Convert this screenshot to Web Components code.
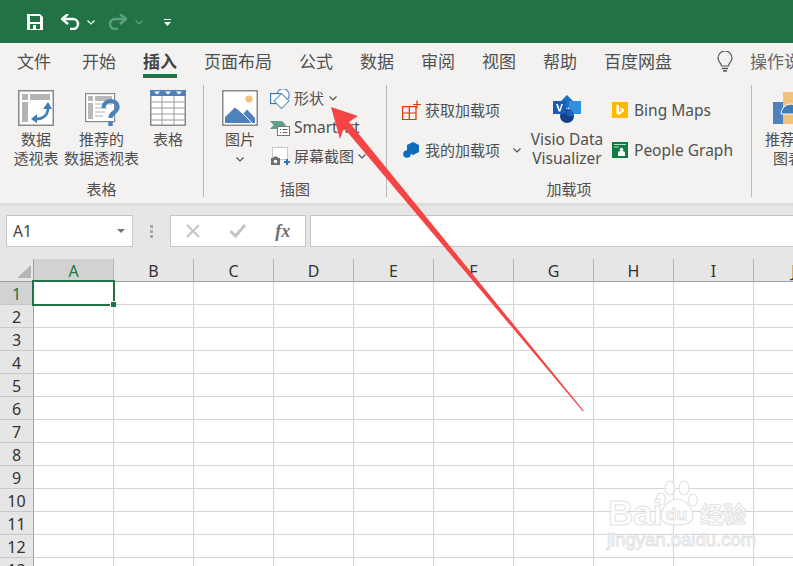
<!DOCTYPE html>
<html lang="zh">
<head>
<meta charset="utf-8">
<title>Excel</title>
<style>
  html, body { margin: 0; padding: 0; background: #fff; }
  body { font-family: "Noto Sans", "Noto Sans CJK SC", sans-serif; color: #444; }
  excel-app { width: 793px; height: 566px; }
  .lat { font-size: 15.5px; }
</style>
</head>
<body>
<excel-app>
  <excel-titlebar></excel-titlebar>
  <excel-tabs></excel-tabs>
  <excel-ribbon>
    <ribbon-group label="表格" style="width:204px">
      <big-button style="width:46px;margin-left:13px">
        <svg slot="icon" width="36" height="36" viewBox="0 0 36 36">
          <rect x=".75" y=".75" width="34.5" height="34.5" fill="#fff" stroke="#8a8a8a" stroke-width="1.5"/>
          <path d="M4 4h6v6H4zM12 4h20v6H12zM4 12h6v20H4z" fill="#b4b4b4"/>
          <path d="M15 29c9 1 15-3 15-11" fill="none" stroke="#3f7cb8" stroke-width="2.6"/>
          <path d="M13 29l6-5v9zM30 12l-5 7h9z" fill="#3f7cb8"/>
        </svg>
        数据<br>透视表
      </big-button>
      <big-button style="width:75px;margin-left:5px">
        <svg slot="icon" width="36" height="36" viewBox="0 0 36 36">
          <rect x="1.6" y="3.6" width="29" height="28" fill="#fff" stroke="#8a8a8a" stroke-width="1.2"/>
          <path d="M4 6h5v5H4zM11 6h17v5H11zM4 13h5v16H4z" fill="#b8b8b8"/>
          <path d="M11 14h17M11 18h12M11 22h10M11 26h8" stroke="#d8d8d8" stroke-width="2"/>
          <path d="M19.5 18c0-9 14-9 14-1 0 6-7 5-7 11" fill="none" stroke="#4a82bd" stroke-width="4.2"/>
          <rect x="24.3" y="31" width="4.4" height="5" fill="#4a82bd"/>
        </svg>
        推荐的<br>数据透视表
      </big-button>
      <big-button style="width:36px;margin-left:11px">
        <svg slot="icon" width="36" height="36" viewBox="0 0 36 36">
          <rect x=".75" y=".75" width="34.5" height="34.5" fill="#fff" stroke="#8a8a8a" stroke-width="1.5"/>
          <rect width="36" height="6" fill="#4f81bd"/>
          <path d="M4 1.5h6l-3 3zM15 1.5h6l-3 3zM26 1.5h6l-3 3z" fill="#fff"/>
          <path d="M12 6v29M24 6v29M1 12h34M1 18h34M1 24h34M1 30h34" stroke="#9a9a9a" stroke-width="1"/>
        </svg>
        表格
      </big-button>
    </ribbon-group>

    <ribbon-group label="插图" style="width:183px">
      <big-button style="width:36px;margin-left:18px">
        <svg slot="icon" width="36" height="36" viewBox="0 0 36 36">
          <rect x=".75" y=".75" width="34.5" height="34.5" fill="#fff" stroke="#8a8a8a" stroke-width="1.5"/>
          <circle cx="27" cy="9" r="3.6" fill="#f0c27b"/>
          <path d="M3 33V27L13 17.5 21 24 25 19.5 33 28V33z" fill="#4f81bd"/>
          <path d="M18 20.5L30 33" stroke="#fff" stroke-width="1"/>
        </svg>
        图片<down-chevron style="margin-top:8px"></down-chevron>
      </big-button>
      <small-column style="margin-left:12px;padding-top:4px;--row:29px">
        <small-button>
          <svg slot="icon" width="20" height="20" viewBox="0 0 20 20">
            <circle cx="13" cy="6" r="6.2" fill="#fff" stroke="#4a82bd" stroke-width="1.1"/>
            <rect x=".6" y="4.6" width="10" height="10" fill="#fff" stroke="#2f6fae" stroke-width="1.1"/>
            <path d="M11.5 4.5L19 12l-7.5 7.5L4 12z" fill="#fff" stroke="#6a9ccc" stroke-width="1.1"/>
          </svg>
          形状<down-chevron style="margin-left:5px"></down-chevron>
        </small-button>
        <small-button>
          <svg slot="icon" width="20" height="20" viewBox="0 0 20 20">
            <path d="M0 3h12l4 4-4 4H0l3.5-4z" fill="#5f9e8a"/>
            <rect x="7.5" y="8.5" width="12" height="9" fill="#fff" stroke="#777"/>
            <path d="M10 11.5h1M12.5 11.5h5M10 14.5h1M12.5 14.5h5" stroke="#666"/>
          </svg>
          <span class="lat">SmartArt</span>
        </small-button>
        <small-button>
          <svg slot="icon" width="20" height="20" viewBox="0 0 20 20">
            <rect x="2.5" y=".5" width="15" height="12" fill="#fff" stroke="#999" stroke-dasharray="1 1"/>
            <path d="M1 11h2l1-1.5h3l1 1.5h2v7H1z" fill="#6e6e6e"/>
            <circle cx="5.5" cy="14.5" r="1.8" fill="#fff"/>
            <path d="M14 15h6M17 12v6" stroke="#2f74b5" stroke-width="2"/>
          </svg>
          屏幕截图<down-chevron style="margin-left:4px"></down-chevron>
        </small-button>
      </small-column>
    </ribbon-group>

    <ribbon-group label="加载项" style="width:365px">
      <small-column style="margin-left:15px;padding-top:10px;--row:40px;width:100px">
        <small-button gap="3">
          <svg slot="icon" width="20" height="20" viewBox="0 0 20 20">
            <path d="M.6 6.6H14v13H.6zM.6 13h13.4M7.3 6.6v13" fill="none" stroke="#d83b01" stroke-width="1.2"/>
            <path d="M11 4.5h8M15 .5v8" stroke="#d83b01" stroke-width="1.2"/>
          </svg>
          获取加载项
        </small-button>
        <small-button gap="3">
          <svg slot="icon" width="20" height="20" viewBox="0 0 20 20">
            <path d="M11 2l6 3v7l-6 3-6-3V5z" fill="#0f6cbd"/>
            <circle cx="5" cy="14" r="3.8" fill="#0f6cbd"/>
          </svg>
          我的加载项
        </small-button>
      </small-column>
      <down-chevron style="margin:68px 0 0 11px;align-self:flex-start"></down-chevron>
      <big-button style="width:78px;margin-left:7px">
        <svg slot="icon" width="32" height="36" viewBox="0 0 32 36">
          <path d="M16 5l7 7-7 7-7-7z" fill="#1b6ec2"/>
          <rect x="18" y="11" width="12" height="13" fill="#2f8fe0"/>
          <circle cx="16" cy="26" r="7" fill="#123f87"/>
          <path d="M16 19a7 7 0 0 1 7 7h-7z" fill="#1f5fb8"/>
          <rect x="2" y="11" width="13" height="13" fill="#185abd"/>
          <path d="M5 14h1.9l1.7 5.5L10.3 14H12l-2.600 7.500H7.600z" fill="#fff"/>
        </svg>
        <span class="lat">Visio Data<br>Visualizer</span>
      </big-button>
      <small-column style="margin-left:6px;padding-top:10px;--row:40px">
        <small-button gap="6">
          <svg slot="icon" width="16" height="20" viewBox="0 0 16 20">
            <rect y="2" width="16" height="16" fill="#ffb900"/>
            <path d="M4.5 4.5l2.500 1v6.500l3-1.800-1.500-.7-.8-2 4.300 1.500v2.200L7 15l-2.500-1.400z" fill="#fff"/>
          </svg>
          <span class="lat">Bing Maps</span>
        </small-button>
        <small-button gap="6">
          <svg slot="icon" width="16" height="20" viewBox="0 0 16 20">
            <rect y="2" width="16" height="16" fill="#107c41"/>
            <path d="M2 4.5h12M2 7h5" stroke="#b9dcc8" stroke-width="1.2"/>
            <circle cx="9.5" cy="9.5" r="1.8" fill="#fff"/>
            <path d="M6 16v-4l2-1h3l2 1v4z" fill="#fff"/>
          </svg>
          <span class="lat">People Graph</span>
        </small-button>
      </small-column>
    </ribbon-group>

    <ribbon-group label="" style="width:60px">
      <big-button style="width:60px;margin-left:13px;align-items:flex-start">
        <svg slot="icon" width="36" height="36" viewBox="0 0 36 36" style="margin-left:1px">
          <rect x="7" y="12" width="10" height="22" fill="#4f81bd"/>
          <rect x="17" y="2" width="10" height="32" fill="#f0c27b"/>
          <path d="M15 24a10 10 0 0 1 20 0z" fill="#3f7cb8" stroke="#fff" stroke-width="1"/>
        </svg>
        <span style="display:block;white-space:nowrap;text-align:left">推荐的<br><span style="margin-left:8px">图表</span></span>
      </big-button>
    </ribbon-group>
  </excel-ribbon>
  <excel-formula-bar></excel-formula-bar>
  <excel-sheet></excel-sheet>
  <excel-watermark></excel-watermark>
  <excel-arrow></excel-arrow>
</excel-app>

<script>
class ExcelApp extends HTMLElement {
  constructor() {
    super();
    this.attachShadow({ mode: "open" });
  }

  connectedCallback() {
    this.shadowRoot.innerHTML = `
    <style>
      :host {
        display: flex;
        flex-direction: column;
        position: relative;
        overflow: hidden;
      }
    </style>
    <slot></slot>
    `;
  }
}

class ExcelTitlebar extends HTMLElement {
  constructor() {
    super();
    this.attachShadow({ mode: "open" });
  }

  connectedCallback() {
    this.shadowRoot.innerHTML = `
    <style>
      :host {
        display: flex;
        align-items: center;
        height: 43px;
        flex: none;
        background: #217346;
        padding-left: 27px;
        padding-top: 1px;
        box-sizing: border-box;
      }
      svg { display: block; flex: none; }
    </style>
    <svg width="16" height="16" viewBox="0 0 16 16">
      <path d="M0 0h13l3 3v13H0z" fill="#fff"/>
      <rect x="3" y="2" width="10" height="6" fill="#217346"/>
      <rect x="3" y="10" width="10" height="5" fill="#217346"/>
      <rect x="6" y="11" width="3" height="4" fill="#fff"/>
    </svg>
    <svg width="19" height="16" viewBox="0 0 19 16" style="margin-left:18px">
      <path d="M2 5h10a5 5 0 0 1 0 10H9" fill="none" stroke="#fff" stroke-width="2.4"/>
      <path d="M7 0L1 5l6 5" fill="none" stroke="#fff" stroke-width="2.4"/>
    </svg>
    <svg width="8" height="5" viewBox="0 0 8 5" style="margin-left:7px">
      <path d="M.5.5L4 4 7.5.5" fill="none" stroke="#fff" stroke-width="1.2"/>
    </svg>
    <svg width="19" height="16" viewBox="0 0 19 16" style="margin-left:13px">
      <path d="M17 5H7a5 5 0 0 0 0 10h3" fill="none" stroke="#5f9f7f" stroke-width="2.4"/>
      <path d="M12 0l6 5-6 5" fill="none" stroke="#5f9f7f" stroke-width="2.4"/>
    </svg>
    <svg width="8" height="5" viewBox="0 0 8 5" style="margin-left:8px">
      <path d="M.5.5L4 4 7.5.5" fill="none" stroke="#5f9f7f" stroke-width="1.2"/>
    </svg>
    <svg width="7" height="7" viewBox="0 0 7 7" style="margin-left:21px">
      <path d="M0 .5h7" stroke="#fff"/>
      <path d="M0 3h7L3.5 7z" fill="#fff"/>
    </svg>
    `;
  }
}

class ExcelTabs extends HTMLElement {
  constructor() {
    super();
    this.attachShadow({ mode: "open" });
  }

  connectedCallback() {
    const tabs = ["文件", "开始", "插入", "页面布局", "公式", "数据", "审阅", "视图", "帮助", "百度网盘"];
    this.shadowRoot.innerHTML = `
    <style>
      :host {
        display: flex;
        height: 37px;
        flex: none;
        box-sizing: border-box;
        padding-left: 17px;
        gap: 27px;
        background: #f3f2f1;
        font: 17px/37px "Noto Sans CJK SC", sans-serif;
        color: #505050;
        white-space: nowrap;
        overflow: hidden;
      }
      span { flex: none; height: 36px; margin-top: -1px; }
      span:first-of-type { margin-right: 4px; }
      .on { font-weight: 700; color: #444; border-bottom: 4px solid #217346; height: 32px; line-height: 37px; }
      svg { flex: none; margin: 8px 0 0 17px; }
      .search { color: #666; margin-left: -11px; }
    </style>
    ${tabs.map(t => `<span class="${t === "插入" ? "on" : ""}">${t}</span>`).join("")}
    <svg width="18" height="22" viewBox="0 0 18 22">
      <path d="M5.5 15c0-3-3.500-4-3.500-8a7 7 0 0 1 14 0c0 4-3.500 5-3.500 8z" fill="none" stroke="#555" stroke-width="1.2"/>
      <path d="M6 17.500h6M7 20h4" stroke="#555" stroke-width="1.3"/>
    </svg>
    <span class="search">操作说明搜索</span>
    `;
  }
}

class ExcelRibbon extends HTMLElement {
  constructor() {
    super();
    this.attachShadow({ mode: "open" });
  }

  connectedCallback() {
    this.shadowRoot.innerHTML = `
    <style>
      :host {
        display: flex;
        flex: none;
        height: 123px;
        background: #f3f2f1;
        overflow: hidden;
        font: 15px/19px "Noto Sans", "Noto Sans CJK SC", sans-serif;
        color: #505050;
        position: relative;
        z-index: 1;
      }
    </style>
    <slot></slot>
    `;
  }
}

class RibbonGroup extends HTMLElement {
  constructor() {
    super();
    this.attachShadow({ mode: "open" });
  }

  connectedCallback() {
    this.shadowRoot.innerHTML = `
    <style>
      :host {
        display: flex;
        flex: none;
        box-sizing: border-box;
        height: 123px;
      }
      .body { flex: 1; min-width: 0; display: flex; flex-direction: column; }
      .items { flex: 1; display: flex; align-items: flex-start; }
      .label { height: 24px; line-height: 20px; text-align: center; }
      .sep { flex: none; width: 1px; height: 112px; margin-top: 5px; background: #b9b9b9; }
    </style>
    <div class="body">
      <div class="items"><slot></slot></div>
      <div class="label"></div>
    </div>
    <div class="sep"></div>
    `;
    this.shadowRoot.querySelector(".label").textContent = this.getAttribute("label");
  }
}

class BigButton extends HTMLElement {
  constructor() {
    super();
    this.attachShadow({ mode: "open" });
  }

  connectedCallback() {
    this.shadowRoot.innerHTML = `
    <style>
      :host {
        display: flex;
        flex-direction: column;
        align-items: center;
        flex: none;
        padding-top: 10px;
        text-align: center;
        white-space: nowrap;
      }
      .icon { height: 36px; margin-bottom: 4px; }
      ::slotted(svg) { display: block; }
    </style>
    <div class="icon"><slot name="icon"></slot></div>
    <div><slot></slot></div>
    `;
  }
}

class SmallColumn extends HTMLElement {
  constructor() {
    super();
    this.attachShadow({ mode: "open" });
  }

  connectedCallback() {
    this.shadowRoot.innerHTML = `
    <style>
      :host { display: flex; flex-direction: column; flex: none; box-sizing: content-box; }
    </style>
    <slot></slot>
    `;
  }
}

class SmallButton extends HTMLElement {
  constructor() {
    super();
    this.attachShadow({ mode: "open" });
  }

  connectedCallback() {
    const gap = this.getAttribute("gap") || 4;
    this.shadowRoot.innerHTML = `
    <style>
      :host {
        display: flex;
        align-items: center;
        gap: ${gap}px;
        height: var(--row);
        white-space: nowrap;
      }
      ::slotted(svg) { display: block; flex: none; }
      .t { display: flex; align-items: center; }
    </style>
    <slot name="icon"></slot>
    <span class="t"><slot></slot></span>
    `;
  }
}

class DownChevron extends HTMLElement {
  constructor() {
    super();
    this.attachShadow({ mode: "open" });
  }

  connectedCallback() {
    this.shadowRoot.innerHTML = `
    <style>
      :host { display: block; width: 8px; height: 5px; flex: none; margin-left: auto; margin-right: auto; }
      svg { display: block; }
    </style>
    <svg width="8" height="5" viewBox="0 0 8 5">
      <path d="M.5.5L4 4 7.5.5" fill="none" stroke="#555" stroke-width="1.2"/>
    </svg>
    `;
  }
}

class ExcelFormulaBar extends HTMLElement {
  constructor() {
    super();
    this.attachShadow({ mode: "open" });
  }

  connectedCallback() {
    this.shadowRoot.innerHTML = `
    <style>
      :host {
        display: flex;
        flex: none;
        box-sizing: border-box;
        height: 56px;
        padding: 12px 0 12px 6px;
        background: linear-gradient(#d9d8d6 0, #e6e6e6 4px);
        font-family: "Noto Sans", sans-serif;
        color: #444;
      }
      .box { box-sizing: border-box; height: 32px; background: #fff; border: 1px solid #c6c6c6; flex: none; }
      .name { width: 127px; display: flex; align-items: center; justify-content: space-between; padding: 0 7px 0 6px; font-size: 15.5px; }
      .tri { width: 0; height: 0; border: 4px solid transparent; border-top: 4px solid #777; margin-top: 4px; }
      .dots { width: 37px; display: flex; flex-direction: column; align-items: center; justify-content: center; gap: 2px; flex: none; }
      .dots i { width: 3px; height: 3px; background: #aaa; }
      .fx { width: 136px; display: flex; align-items: center; }
      .fx > * { flex: 1; display: flex; justify-content: center; align-items: center; }
      .fx svg { display: block; }
      em { font: italic 700 18px "Liberation Serif", serif; color: #6e6e6e; }
      .input { margin-left: 4px; width: 500px; }
    </style>
    <div class="box name">A1<span class="tri"></span></div>
    <div class="dots"><i></i><i></i><i></i></div>
    <div class="box fx">
      <span><svg width="16" height="16" viewBox="0 0 16 16"><path d="M2 2l12 12M14 2L2 14" stroke="#c4c4c4" stroke-width="2"/></svg></span>
      <span><svg width="18" height="16" viewBox="0 0 18 16"><path d="M1.5 8l5 5L16 2" fill="none" stroke="#c4c4c4" stroke-width="3"/></svg></span>
      <span><em>fx</em></span>
    </div>
    <div class="box input"></div>
    `;
  }
}

class ExcelSheet extends HTMLElement {
  constructor() {
    super();
    this.attachShadow({ mode: "open" });
  }

  connectedCallback() {
    const cols = "ABCDEFGHIJ".split("");
    let cells = `<div class="corner"><svg width="16" height="13" viewBox="0 0 16 13"><path d="M15 0v13H1z" fill="#b5b5b5"/></svg></div>`;
    cols.forEach((c, i) => {
      cells += `<div class="ch ${i === 0 ? "sel" : ""}">${c}</div>`;
    });
    for (let r = 1; r <= 13; r++) {
      cells += `<div class="rh ${r === 1 ? "sel" : ""}">${r}</div>`;
      cols.forEach((c, i) => {
        const cur = r === 1 && i === 0;
        cells += `<div class="c">${cur ? '<div class="cursor"><i></i></div>' : ""}</div>`;
      });
    }
    this.shadowRoot.innerHTML = `
    <style>
      :host {
        display: grid;
        grid-template-columns: 34px repeat(10, 80px);
        grid-template-rows: 23px;
        grid-auto-rows: 23px;
        flex: none;
        background: #fff;
        font: 16px "Noto Sans", sans-serif;
        color: #333;
      }
      .corner { background: #e6e6e6; border-right: 1px solid #9f9f9f; border-bottom: 1px solid #9f9f9f; box-sizing: border-box; padding: 6px 0 0 16px; }
      .corner svg { display: block; }
      .ch, .rh { box-sizing: border-box; background: #e6e6e6; display: flex; align-items: center; justify-content: center; padding-top: 2px; }
      .ch { border-right: 1px solid #b6b6b6; border-bottom: 1px solid #9f9f9f; }
      .rh { border-right: 1px solid #9f9f9f; border-bottom: 1px solid #c8c8c8; }
      .sel { background: #d2d2d2; color: #217346; }
      .c { box-sizing: border-box; border-right: 1px solid #d4d4d4; border-bottom: 1px solid #d4d4d4; position: relative; }
      .cursor { position: absolute; left: -2px; top: -2px; width: 83px; height: 26px; box-sizing: border-box; border: 2px solid #217346; z-index: 1; }
      .cursor i { position: absolute; right: -3px; bottom: -3px; width: 5px; height: 5px; background: #217346; border: 1px solid #fff; border-width: 1px 0 0 1px; }
    </style>
    ${cells}
    `;
  }
}

class ExcelWatermark extends HTMLElement {
  constructor() {
    super();
    this.attachShadow({ mode: "open" });
  }

  connectedCallback() {
    this.shadowRoot.innerHTML = `
    <style>
      :host {
        position: absolute;
        left: 600px;
        top: 478px;
        width: 160px;
        height: 72px;
        z-index: 2;
        font-family: "Liberation Sans", "Noto Sans CJK SC", sans-serif;
        color: rgba(255, 255, 255, .85);
        -webkit-text-stroke: 1px #e2e2e2;
      }
      span { position: absolute; white-space: nowrap; }
      svg { position: absolute; left: 0; top: 0; }
    </style>
    <svg width="160" height="52" viewBox="0 0 160 52" fill="rgba(255,255,255,.8)" stroke="#e0e0e0" stroke-width="1.2">
      <ellipse cx="70" cy="10" rx="5" ry="7"/>
      <ellipse cx="84" cy="10" rx="5" ry="7"/>
      <ellipse cx="61" cy="21" rx="4.5" ry="6"/>
      <ellipse cx="93" cy="22" rx="4.5" ry="6"/>
      <path d="M77 21c7 0 16 8 16 17 0 6-6 9-16 9s-16-3-16-9c0-9 9-17 16-17z"/>
    </svg>
    <span style="left:8px;top:15px;font:700 35px 'Liberation Sans',sans-serif">Bai</span>
    <span style="left:66px;top:27px;font:700 17px 'Liberation Sans',sans-serif">du</span>
    <span style="left:100px;top:20px;font:700 23px 'Noto Sans CJK SC',sans-serif;line-height:30px">经验</span>
    <span style="left:7px;top:51px;font:400 18.5px 'Liberation Sans',sans-serif">jingyan.baidu.com</span>
    `;
  }
}

class ExcelArrow extends HTMLElement {
  constructor() {
    super();
    this.attachShadow({ mode: "open" });
  }

  connectedCallback() {
    this.shadowRoot.innerHTML = `
    <style>
      :host { position: absolute; inset: 0; z-index: 3; pointer-events: none; }
      svg { display: block; }
    </style>
    <svg width="793" height="566" viewBox="0 0 793 566">
      <path d="M331 107L358 116 349 122 584 411 582.500 411 344 128 340 139z" fill="#f54444"/>
    </svg>
    `;
  }
}

customElements.define("excel-app", ExcelApp);
customElements.define("excel-titlebar", ExcelTitlebar);
customElements.define("excel-tabs", ExcelTabs);
customElements.define("excel-ribbon", ExcelRibbon);
customElements.define("ribbon-group", RibbonGroup);
customElements.define("big-button", BigButton);
customElements.define("small-column", SmallColumn);
customElements.define("small-button", SmallButton);
customElements.define("down-chevron", DownChevron);
customElements.define("excel-formula-bar", ExcelFormulaBar);
customElements.define("excel-sheet", ExcelSheet);
customElements.define("excel-watermark", ExcelWatermark);
customElements.define("excel-arrow", ExcelArrow);
</script>
</body>
</html>
